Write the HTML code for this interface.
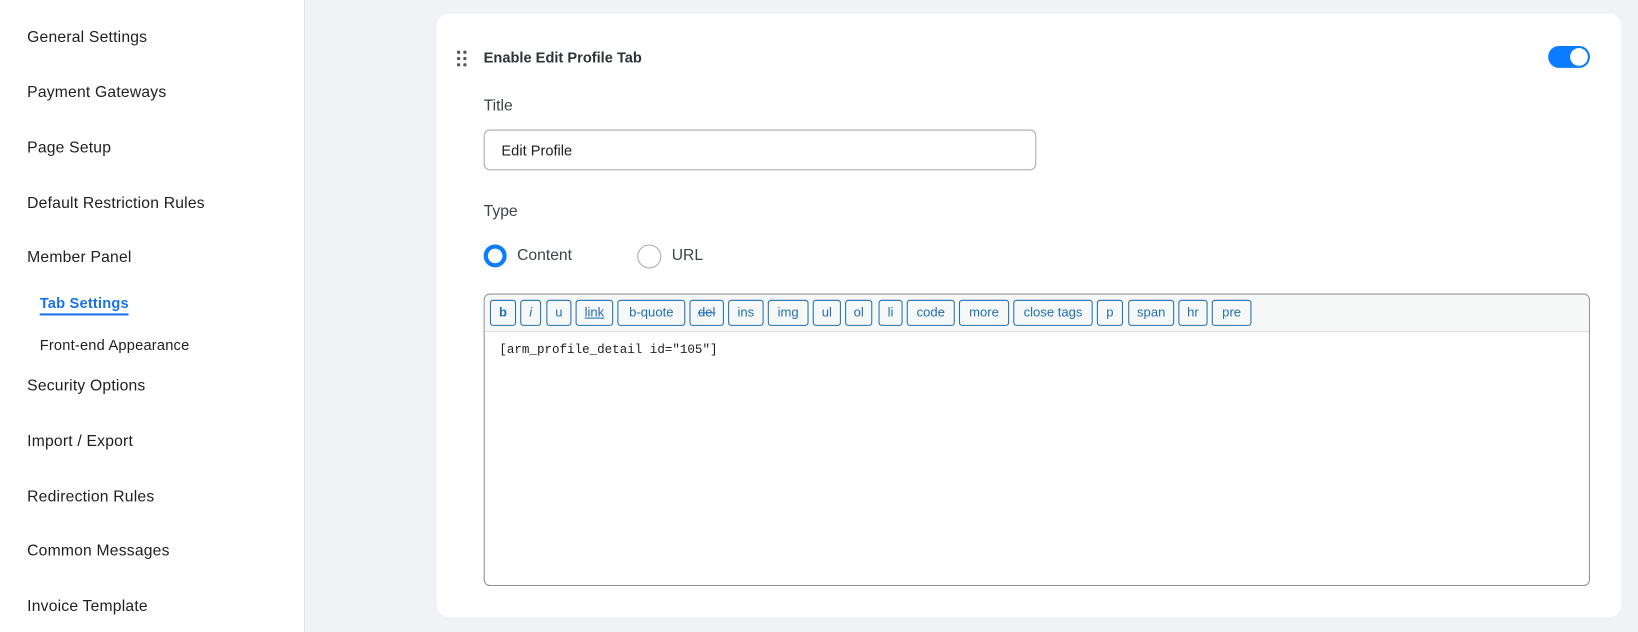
<!DOCTYPE html>
<html><head><meta charset="utf-8"><style>
*{box-sizing:border-box;margin:0;padding:0}
html,body{width:1638px;height:632px;overflow:hidden;background:#f0f2f5}
#w{width:1568px;height:605px;position:relative;transform:scale(1.04464);transform-origin:0 0;font-family:"Liberation Sans",sans-serif;color:#2c3338}
.side{position:absolute;left:0;top:0;width:292px;height:605px;background:#fff;border-right:1px solid #e2e4e7}
.side div{position:absolute;left:26px;font-size:15px;color:#1e1e1e;letter-spacing:0.2px}
.side .sub{left:38px;font-size:14px}
.side .act{color:#1a73e8;font-weight:bold;border-bottom:2px solid #1a73e8;padding-bottom:2px}
.card{position:absolute;left:418px;top:13px;width:1134px;height:578px;background:#fff;border-radius:12px}
.abs{position:absolute}
.btn{position:absolute;top:287px;height:25px;border:1px solid #2271b1;border-radius:3px;background:#f6f7f7;color:#2271b1;font-size:12.5px;text-align:center;line-height:22px}
</style></head><body><div id="w">
<div class="side">
<div style="top:27px">General Settings</div>
<div style="top:80px">Payment Gateways</div>
<div style="top:133px">Page Setup</div>
<div style="top:186px">Default Restriction Rules</div>
<div style="top:238px">Member Panel</div>
<div class="sub act" style="top:282px">Tab Settings</div>
<div class="sub" style="top:322px">Front-end Appearance</div>
<div style="top:361px">Security Options</div>
<div style="top:414px">Import / Export</div>
<div style="top:467px">Redirection Rules</div>
<div style="top:519px">Common Messages</div>
<div style="top:572px">Invoice Template</div>
</div>
<div class="card"></div>
<svg class="abs" style="left:437px;top:48px" width="12" height="18"><g fill="#50575e"><circle cx="2" cy="2" r="1.6"/><circle cx="8" cy="2" r="1.6"/><circle cx="2" cy="8" r="1.6"/><circle cx="8" cy="8" r="1.6"/><circle cx="2" cy="14" r="1.6"/><circle cx="8" cy="14" r="1.6"/></g></svg>
<div class="abs" style="left:463px;top:47px;font-size:14px;font-weight:bold;color:#2c3338">Enable Edit Profile Tab</div>
<div class="abs" style="left:1482px;top:44px;width:40px;height:21px;border-radius:11px;background:#0a7cff"><div style="position:absolute;right:2px;top:2px;width:17px;height:17px;border-radius:50%;background:#fff"></div></div>
<div class="abs" style="left:463px;top:93px;font-size:15px;color:#3c434a">Title</div>
<div class="abs" style="left:463px;top:124px;width:529px;height:39px;border:1px solid #a7aaad;border-radius:6px;padding:11px 16px;font-size:14px;color:#1e1e1e">Edit Profile</div>
<div class="abs" style="left:463px;top:194px;font-size:15px;color:#3c434a">Type</div>
<div class="abs" style="left:463px;top:234px;width:22px;height:22px;border-radius:50%;border:4px solid #0a7cff"></div>
<div class="abs" style="left:495px;top:236px;font-size:15px;color:#3c434a">Content</div>
<div class="abs" style="left:610px;top:234px;width:23px;height:23px;border-radius:50%;border:1px solid #a7aaad"></div>
<div class="abs" style="left:643px;top:236px;font-size:15px;color:#3c434a">URL</div>
<div class="abs" style="left:463px;top:281px;width:1059px;height:280px;border:1px solid #8c8f94;border-radius:6px;overflow:hidden">
<div style="height:36px;background:#f6f7f7;border-bottom:1px solid #dcdcde"></div>
<div style="padding:10px 14px;font-family:'Liberation Mono',monospace;font-size:12px;color:#1e1e1e">[arm_profile_detail id="105"]</div>
</div>
<div class="btn" style="left:469px;width:25px;font-weight:bold">b</div>
<div class="btn" style="left:498px;width:20px;font-style:italic">i</div>
<div class="btn" style="left:523px;width:24px">u</div>
<div class="btn" style="left:551px;width:36px;text-decoration:underline">link</div>
<div class="btn" style="left:591px;width:65px">b-quote</div>
<div class="btn" style="left:660px;width:33px;text-decoration:line-through">del</div>
<div class="btn" style="left:697px;width:34px">ins</div>
<div class="btn" style="left:735px;width:39px">img</div>
<div class="btn" style="left:778px;width:27px">ul</div>
<div class="btn" style="left:809px;width:26px">ol</div>
<div class="btn" style="left:841px;width:23px">li</div>
<div class="btn" style="left:868px;width:46px">code</div>
<div class="btn" style="left:918px;width:48px">more</div>
<div class="btn" style="left:970px;width:76px">close tags</div>
<div class="btn" style="left:1050px;width:25px">p</div>
<div class="btn" style="left:1080px;width:44px">span</div>
<div class="btn" style="left:1128px;width:28px">hr</div>
<div class="btn" style="left:1160px;width:38px">pre</div>
</div></body></html>
